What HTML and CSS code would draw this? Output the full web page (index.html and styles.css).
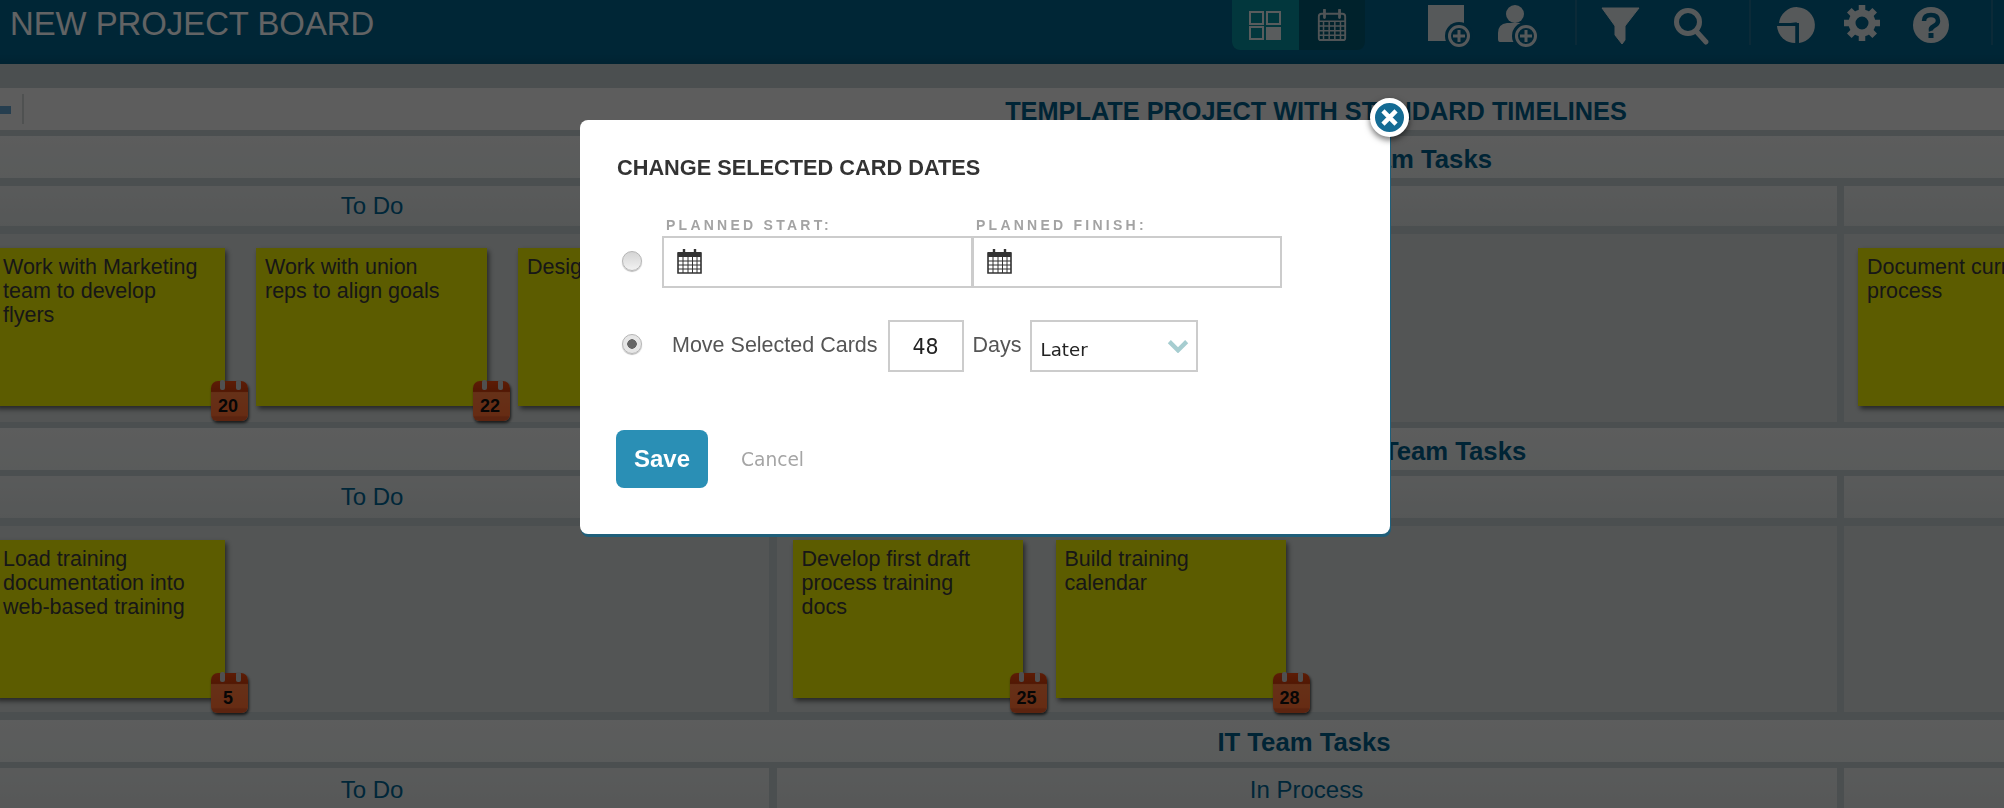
FILE: index.html
```html
<!DOCTYPE html>
<html lang="en">
<head>
<meta charset="utf-8">
<title>New Project Board</title>
<link rel="stylesheet" href="styles.css">
</head>
<body>
<header class="topbar">
  <h1 class="board-name">NEW PROJECT BOARD</h1>
  <div class="view-toggle">
    <div class="view-btn active">
      <svg class="view-icon" viewBox="0 0 32 30"><path d="M1 2h13v12H1zM18 2h13v12H18zM1 17h13v12H1z" fill="none" stroke="currentColor" stroke-width="2"/><path d="M17 17h15v13H17z" fill="currentColor"/></svg>
    </div>
    <div class="view-btn">
      <svg class="view-icon" viewBox="0 0 32 34"><path d="M2 8q0-3 3-3h22q3 0 3 3v23q0 2-2 2H4q-2 0-2-2z" fill="none" stroke="currentColor" stroke-width="2"/><path d="M8 1v8M24 1v8" stroke="currentColor" stroke-width="3" stroke-linecap="round"/><path d="M2 13h28M2 18h28M2 23h28M2 28h28M7 13v20M13 13v20M19 13v20M25 13v20" stroke="currentColor" stroke-width="1.6"/></svg>
    </div>
  </div>
  <div class="tool-group first">
    <svg class="tool" viewBox="0 0 48 48"><path d="M3 5h36v36H3z" fill="currentColor"/><circle cx="34" cy="36" r="14" fill="#025f87"/><circle cx="34" cy="36" r="9.5" fill="none" stroke="currentColor" stroke-width="3"/><path d="M34 30v12M28 36h12" stroke="currentColor" stroke-width="3"/></svg>
    <svg class="tool" viewBox="0 0 48 48"><circle cx="22" cy="14" r="9" fill="currentColor"/><path d="M7 42q-2 0-2-3v-6q0-9 9-10h13q6 2 8 5v14z" fill="currentColor"/><circle cx="33" cy="36" r="14" fill="#025f87"/><circle cx="33" cy="36" r="9.5" fill="none" stroke="currentColor" stroke-width="3"/><path d="M33 30v12M27 36h12" stroke="currentColor" stroke-width="3"/></svg>
  </div>
  <div class="tool-group middle">
    <svg class="tool" viewBox="0 0 48 48"><path d="M6 8h37L29 26v14l-3 4-7-9v-9z" fill="currentColor" stroke="currentColor" stroke-linejoin="round"/></svg>
    <svg class="tool" viewBox="0 0 48 48"><circle cx="24" cy="22" r="11.5" fill="none" stroke="currentColor" stroke-width="5"/><path d="M32 31l10 11" stroke="currentColor" stroke-width="5" stroke-linecap="round"/></svg>
  </div>
  <div class="tool-group last">
    <svg class="tool" viewBox="0 0 48 48"><path d="M8 23A18 18 0 1 1 28 43V23z" fill="currentColor"/><path d="M6 26h19v17A18 18 0 0 1 6 26z" fill="currentColor"/><path d="M9 25L25 23V43" fill="none" stroke="#025f87" stroke-width="1.5"/></svg>
    <svg class="tool" viewBox="0 0 48 48"><circle cx="23" cy="23" r="10" fill="none" stroke="currentColor" stroke-width="7"/><path d="M23 5v8M23 33v8M5 23h8M33 23h8M10.3 10.3l5.6 5.6M30.1 30.1l5.6 5.6M10.3 35.7l5.6-5.6M30.1 15.9l5.6-5.6" stroke="currentColor" stroke-width="6.5"/></svg>
    <svg class="tool" viewBox="0 0 48 48"><circle cx="24" cy="25" r="18" fill="currentColor"/><path d="M17 21q0-6 7-6t7 6q0 3-4 5t-3 5" fill="none" stroke="#025f87" stroke-width="4.5"/><rect x="21.5" y="33" width="5" height="5" fill="#025f87"/></svg>
  </div>
</header>

<main class="board">
  <div class="band title-band">
    <div class="band-tools"><span class="band-tool"></span><span class="band-sep"></span></div>
    <h2 class="band-title">TEMPLATE PROJECT WITH STANDARD TIMELINES</h2>
  </div>

  <section class="lane lane-one">
    <h3 class="lane-name">Human Resources Team Tasks</h3>
    <div class="cols heads">
      <div class="col-head">To Do</div>
      <div class="col-head">In Process</div>
      <div class="col-head"></div>
    </div>
    <div class="cols bodies">
      <div class="col-body first">
        <article class="card">Work with Marketing team to develop flyers<span class="due">20</span></article>
        <article class="card">Work with union reps to align goals<span class="due">22</span></article>
        <article class="card">Design flyers</article>
      </div>
      <div class="col-body"></div>
      <div class="col-body last">
        <article class="card">Document current process</article>
      </div>
    </div>
  </section>

  <section class="lane lane-two">
    <h3 class="lane-name">Process Documentation Team Tasks</h3>
    <div class="cols heads">
      <div class="col-head">To Do</div>
      <div class="col-head">In Process</div>
      <div class="col-head"></div>
    </div>
    <div class="cols bodies">
      <div class="col-body first">
        <article class="card">Load training documentation into web-based training<span class="due">5</span></article>
      </div>
      <div class="col-body">
        <article class="card">Develop first draft process training docs<span class="due">25</span></article>
        <article class="card">Build training calendar<span class="due">28</span></article>
      </div>
      <div class="col-body last"></div>
    </div>
  </section>

  <section class="lane lane-three">
    <h3 class="lane-name">IT Team Tasks</h3>
    <div class="cols heads">
      <div class="col-head">To Do</div>
      <div class="col-head">In Process</div>
      <div class="col-head"></div>
    </div>
  </section>
</main>

<div class="scrim"></div>

<div class="dialog">
  <div class="dialog-close">
    <svg viewBox="0 0 16 16"><path d="M2.500 2.500l11 11M13.500 2.500l-11 11" stroke="#fff" stroke-width="3.800"/></svg>
  </div>
  <h2 class="dialog-title">CHANGE SELECTED CARD DATES</h2>
  <div class="date-labels">
    <span class="date-label">PLANNED START:</span>
    <span class="date-label">PLANNED FINISH:</span>
  </div>
  <div class="date-row">
    <span class="radio"></span>
    <div class="date-field">
      <svg class="cal" viewBox="0 0 25 26"><path d="M1 5h23v20H1z" fill="#fff" stroke="#333" stroke-width="1.6"/><path d="M1 4h23v5H1z" fill="#333"/><path d="M7 1v6M18 1v6" stroke="#333" stroke-width="2.4"/><path d="M1 13h23M1 17h23M1 21h23M6 9v16M11 9v16M15.500 9v16M20 9v16" stroke="#333" stroke-width="1"/></svg>
    </div>
    <div class="date-field joined">
      <svg class="cal" viewBox="0 0 25 26"><path d="M1 5h23v20H1z" fill="#fff" stroke="#333" stroke-width="1.6"/><path d="M1 4h23v5H1z" fill="#333"/><path d="M7 1v6M18 1v6" stroke="#333" stroke-width="2.4"/><path d="M1 13h23M1 17h23M1 21h23M6 9v16M11 9v16M15.500 9v16M20 9v16" stroke="#333" stroke-width="1"/></svg>
    </div>
  </div>
  <div class="move-row">
    <span class="radio on"></span>
    <span class="move-text">Move Selected Cards</span>
    <div class="num-field">48</div>
    <span class="move-days">Days</span>
    <div class="select-field">
      <span>Later</span>
      <svg class="chev" viewBox="0 0 20 12"><path d="M2 1.500l8 8 8-8" fill="none" stroke="#a6cdd0" stroke-width="4"/></svg>
    </div>
  </div>
  <div class="dialog-actions">
    <button class="save" type="button">Save</button>
    <span class="cancel">Cancel</span>
  </div>
</div>
</body>
</html>
```
FILE: styles.css
```css
* { box-sizing: border-box; }
html, body { margin: 0; height: 100%; overflow: hidden; }
body {
  width: 2004px;
  height: 808px;
  background: #bcc6c8;
  font-family: "Liberation Sans", Arial, sans-serif;
  font-size: 21.5px;
}

/* top bar */
.topbar {
  display: flex;
  height: 64px;
  padding-left: 10px;
  background: linear-gradient(#025f87 85%, #02577c);
  color: #d8dfe2;
}
.board-name {
  margin: 0;
  font-size: 32.85px;
  line-height: 48px;
  font-weight: 400;
  color: #f6f8f9;
}
.view-toggle {
  display: flex;
  margin-left: auto;
  height: 50px;
  border-radius: 0 0 8px 8px;
  overflow: hidden;
  background: #01556f;
}
.view-btn {
  width: 66.500px;
  display: flex;
  align-items: center;
  justify-content: center;
  padding-bottom: 1px;
  color: #c7d3d8;
}
.view-btn.active { background: #058a9a; color: #dfe6e8; }
.view-icon { width: 32px; height: 32px; }
.tool-group {
  display: flex;
  gap: 20px;
  height: 45px;
  border-right: 2px solid #1c6a8c;
}
.tool-group.first { margin-left: 60px; padding-right: 34px; }
.tool-group.middle { padding: 0 37px 0 19px; }
.tool-group.last { padding: 0 36px 0 20px; margin-right: 11px; }
.tool { width: 48px; height: 48px; flex: none; }

/* board */
.board {
  width: 2682px;
  margin-left: -25px;
  padding-top: 24px;
}
.band {
  height: 42px;
  background: #e8e8e8;
}
.title-band { position: relative; display: flex; align-items: center; justify-content: center; }
.band-tools {
  position: absolute;
  left: 0;
  top: 6px;
  width: 50px;
  height: 30px;
}
.band-tool {
  position: absolute;
  left: 12px;
  top: 12px;
  width: 24px;
  height: 8px;
  background: #5f9bc6;
}
.band-sep {
  position: absolute;
  left: 47px;
  top: 0;
  width: 2px;
  height: 30px;
  background: #c6cbcb;
}
.band-title {
  margin: 0;
  font-size: 25.300px;
  line-height: 46px;
  height: 42px;
  font-weight: 700;
  color: #015a84;
}
.lane-name {
  margin: 0;
  height: 42px;
  padding-right: 24px;
  background: linear-gradient(#e6e8e8, #dfe4e3);
  font-size: 25.700px;
  line-height: 46px;
  font-weight: 700;
  text-align: center;
  color: #015a84;
}
.lane-three .lane-name { line-height: 44px; }
.lane { padding-top: 6px; }
.cols {
  display: grid;
  grid-template-columns: 794px 1060px 813px;
  column-gap: 7.500px;
}
.col-head {
  background: linear-gradient(#dfe2e2, #d5dada);
  color: #00628f;
  font-size: 24px;
  text-align: center;
}
.col-body {
  display: flex;
  gap: 33px;
  padding: 14px 16px;
  background: #d0d5d5;
}
.col-body.first { padding-left: 19px; gap: 31px; }
.col-body.first .card { width: 231px; }
.col-body.first .due { right: -23px; }
.col-body.last { padding-left: 14px; }

.lane-one .heads, .lane-three .heads { margin-top: 8px; }
.lane-one .heads { height: 40px; margin-bottom: 8px; }
.lane-one .col-head { line-height: 40px; }
.lane-one .bodies { height: 188px; }
.lane-two .heads { margin-top: 6px; height: 42px; margin-bottom: 8px; }
.lane-two .col-head { line-height: 42px; }
.lane-two .bodies { height: 186px; }
.lane-three { padding-top: 8px; }
.lane-three .heads { margin-top: 6px; height: 42px; }
.lane-three .col-head { line-height: 44px; background: linear-gradient(#dfe2e2, #d7dbdb); }

.card {
  position: relative;
  flex: none;
  width: 230px;
  height: 158px;
  padding: 7px 24px 0 9px;
  background: #e6e600;
  color: #3a3a3a;
  line-height: 24px;
  box-shadow: 2px 3px 5px rgba(0, 0, 0, .55);
}
.due {
  position: absolute;
  right: -24px;
  bottom: -15px;
  width: 37px;
  height: 40px;
  padding: 12px 3px 0 0;
  border-radius: 7px 7px 6px 6px;
  background: linear-gradient(#e8480f 0, #cc3d0b 26%, #ff7a3c 29%, #ff6e32 86%, #e35a28 90%);
  box-shadow: 1px 2px 3px rgba(0, 0, 0, .7);
  color: #111;
  font-size: 18px;
  font-weight: 700;
  line-height: 26px;
  text-align: center;
}
.due::before, .due::after {
  content: "";
  position: absolute;
  top: -1px;
  width: 5px;
  height: 10px;
  border-radius: 2px;
  background: #c8c8c8;
}
.due::before { left: 9px; }
.due::after { left: 25px; }

/* modal */
.scrim {
  position: fixed;
  inset: 0;
  background: rgba(0, 0, 0, .6);
}
.dialog {
  position: absolute;
  left: 580px;
  top: 120px;
  width: 810px;
  height: 414px;
  padding: 36px 36px 46px 37px;
  border-radius: 8px;
  background: #fff;
  box-shadow: 1px 3px 0 #1f5f7a;
}
.dialog-close {
  position: absolute;
  right: -19px;
  top: -22px;
  width: 39px;
  height: 39px;
  padding: 5px;
  border: 5px solid #fff;
  border-radius: 50%;
  background: #146b94;
  box-shadow: 0 3px 6px rgba(0, 0, 0, .55);
  display: flex;
}
.dialog-close svg { width: 19px; height: 19px; flex: none; margin: -0.500px; }
.dialog-title {
  margin: 0 0 38px;
  font-size: 21.750px;
  line-height: 24px;
  font-weight: 700;
  color: #333;
}
.date-labels {
  display: flex;
  margin: 0 0 4px 49px;
  height: 14px;
}
.date-label {
  width: 310px;
  font-size: 14px;
  line-height: 14px;
  font-weight: 700;
  letter-spacing: 3.250px;
  color: #a3a3a3;
}
.date-row, .move-row { display: flex; align-items: center; padding-left: 5px; }
.date-row { height: 52px; margin-bottom: 32px; }
.radio {
  flex: none;
  width: 20px;
  height: 20px;
  margin: -2px 20px 0 0;
  border-radius: 50%;
  border: 1px solid #b5b5b5;
  background: linear-gradient(#d4d4d4, #f2f2f2);
  box-shadow: 0 1px 1px #bbb;
}
.radio.on {
  margin: -4px 30px 0 0;
  background: radial-gradient(circle, #666 0 4.500px, #e6e6e6 5px);
}
.date-field {
  flex: none;
  width: 311px;
  height: 52px;
  padding: 10px 0 0 13px;
  border: 2px solid #ccc;
  background: #fff;
}
.date-field.joined { width: 310px; margin-left: -1px; }
.cal { display: block; width: 25px; height: 26px; }
.move-row { height: 52px; margin-bottom: 58px; color: #555; }
.move-text { margin: -2px 10px 0 0; }
.num-field {
  flex: none;
  width: 76px;
  height: 52px;
  border: 2px solid #ccc;
  font-family: "DejaVu Sans", sans-serif;
  font-size: 20.5px;
  line-height: 50px;
  text-align: center;
  color: #222;
}
.move-days { margin: -2px 8px 0 9px; }
.select-field {
  flex: none;
  display: flex;
  align-items: center;
  justify-content: space-between;
  width: 168px;
  height: 52px;
  padding: 6px 7px 0 9px;
  border: 2px solid #ccc;
  font-family: "DejaVu Sans", sans-serif;
  font-size: 18.2px;
  color: #222;
}
.chev { width: 22px; height: 13px; margin-top: -6px; }
.dialog-actions { display: flex; align-items: center; margin-left: -1px; }
.save {
  width: 92px;
  height: 58px;
  padding: 0;
  border: 0;
  border-radius: 8px;
  background: #2a8fb5;
  color: #fff;
  font-family: "Liberation Sans", Arial, sans-serif;
  font-size: 24px;
  font-weight: 700;
}
.cancel {
  margin-left: 33px;
  font-family: "DejaVu Sans", sans-serif;
  font-size: 18.6px;
  color: #a5a5a5;
}
```
